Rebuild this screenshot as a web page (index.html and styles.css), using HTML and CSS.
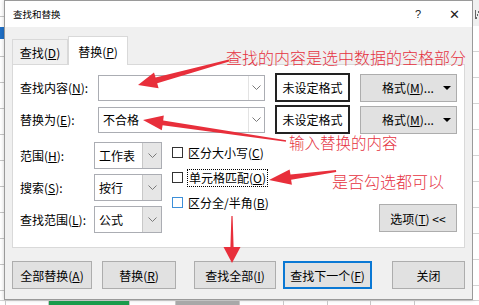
FILE: index.html
```html
<!DOCTYPE html>
<html lang="zh-CN">
<head>
    <meta charset="UTF-8">
    <meta name="viewport" content="width=device-width, initial-scale=1.0">
    <title>查找和替换</title>
    <link rel="stylesheet" href="styles.css">
</head>
<body>

    <div class="desk">
        <div class="sheet-left"></div>

        <div class="dialog">
            <div class="titlebar">
                <span class="title">查找和替换</span>
                <span class="help">?</span>
                <span class="close">✕</span>
            </div>

            <div class="tabs">
                <div class="tab">查找(<u>D</u>)</div>
                <div class="tab active">替换(<u>P</u>)</div>
            </div>

            <div class="panel">
                <div class="row">
                    <span class="label">查找内容(<u>N</u>):</span>
                    <div class="combo wide">
                        <span class="value"></span>
                        <span class="drop"><svg width="9" height="5" viewBox="0 0 9 5"><polyline points="0.5,0.5 4.5,4.5 8.5,0.5" fill="none" stroke="#7a7a7a" stroke-width="1"/></svg></span>
                    </div>
                    <div class="preview">未设定格式</div>
                    <div class="btn fmt">格式(<u>M</u>)... <span class="tri"></span></div>
                </div>
                <div class="row">
                    <span class="label">替换为(<u>E</u>):</span>
                    <div class="combo wide">
                        <span class="value">不合格</span>
                        <span class="drop"><svg width="9" height="5" viewBox="0 0 9 5"><polyline points="0.5,0.5 4.5,4.5 8.5,0.5" fill="none" stroke="#7a7a7a" stroke-width="1"/></svg></span>
                    </div>
                    <div class="preview">未设定格式</div>
                    <div class="btn fmt">格式(<u>M</u>)... <span class="tri"></span></div>
                </div>

                <div class="lower">
                    <div class="fields">
                        <div class="field">
                            <span class="label short">范围(<u>H</u>):</span>
                            <div class="combo small">
                                <span class="value">工作表</span>
                                <span class="drop"><svg width="9" height="5" viewBox="0 0 9 5"><polyline points="0.5,0.5 4.5,4.5 8.5,0.5" fill="none" stroke="#7a7a7a" stroke-width="1"/></svg></span>
                            </div>
                        </div>
                        <div class="field">
                            <span class="label short">搜索(<u>S</u>):</span>
                            <div class="combo small">
                                <span class="value">按行</span>
                                <span class="drop"><svg width="9" height="5" viewBox="0 0 9 5"><polyline points="0.5,0.5 4.5,4.5 8.5,0.5" fill="none" stroke="#7a7a7a" stroke-width="1"/></svg></span>
                            </div>
                        </div>
                        <div class="field">
                            <span class="label short">查找范围(<u>L</u>):</span>
                            <div class="combo small">
                                <span class="value">公式</span>
                                <span class="drop"><svg width="9" height="5" viewBox="0 0 9 5"><polyline points="0.5,0.5 4.5,4.5 8.5,0.5" fill="none" stroke="#7a7a7a" stroke-width="1"/></svg></span>
                            </div>
                        </div>
                    </div>

                    <div class="checks">
                        <div class="check"><span class="box"></span><span>区分大小写(<u>C</u>)</span></div>
                        <div class="check"><span class="box"></span><span class="focus">单元格匹配(<u>O</u>)</span></div>
                        <div class="check"><span class="box blue"></span><span>区分全/半角(<u>B</u>)</span></div>
                    </div>

                    <div class="btn options">选项(<u>T</u>) &lt;&lt;</div>
                </div>
            </div>

            <div class="actions">
                <div class="btn act-all">全部替换(<u>A</u>)</div>
                <div class="btn act-one">替换(<u>R</u>)</div>
                <div class="btn act-find">查找全部(<u>I</u>)</div>
                <div class="btn act-next">查找下一个(<u>F</u>)</div>
                <div class="btn act-close">关闭</div>
            </div>
        </div>

        <div class="sheet-right"><span class="col-head"></span></div>
    </div>

    <div class="sheet-row">
        <span class="cell c1"></span>
        <span class="cell c2"></span>
        <span class="cell c3 green"></span>
        <span class="cell c4"></span>
        <span class="cell c5 grey"></span>
        <span class="cell c6"></span>
        <span class="cell c7"></span>
        <span class="cell c8"></span>
        <span class="cell c9"></span>
    </div>

    <!-- 标注: 红色箭头和文字 -->
    <div class="notes">
        <svg class="arrows" width="479" height="305" viewBox="0 0 479 305">
            <polygon points="228.8,59.6 155.6,77.4 154.0,72.6 138,85 158.6,88.2 157.2,83.2 229.2,61.6" />
            <polygon points="286.1,140.2 163.2,120.6 163.8,115.4 143,120 161.8,130.2 162.6,125.2 285.9,141.8" />
            <polygon points="336,170 290.5,174.4 289.6,169.4 269,180 291.9,184.8 291.1,179.8 336.2,172" />
            <polygon points="231.4,216 230.4,247 223.5,247 232,263 240.5,247 233.6,247 232.6,216" />
        </svg>
        <span class="note n1">查找的内容是选中数据的空格部分</span>
        <span class="note n2">输入替换的内容</span>
        <span class="note n3">是否勾选都可以</span>
    </div>

</body>
</html>
```

FILE: styles.css
```css
/* 查找和替换 对话框 */
body {
    margin: 0;
    width: 479px;
    height: 305px;
    overflow: hidden;
    position: relative;
    background-color: #fff;
    font-family: "Noto Sans CJK SC", "Microsoft YaHei", sans-serif;
    font-size: 12px;
    color: #000;
}

u {
    text-decoration: underline;
    text-underline-offset: 1px;
}

.desk {
    display: flex;
    height: 300px;
}

/* 背后的表格 */
.sheet-left {
    width: 4px;
    background:
        linear-gradient(#1f6fc5, #1f6fc5) 0 27px / 100% 12px no-repeat,
        repeating-linear-gradient(to bottom, #fff 0 25px, #c6c6c6 25px 26px) 0 31px;
    background-color: #fff;
}

.sheet-right {
    width: 6px;
    background:
        linear-gradient(#f0f0f0, #f0f0f0) 0 0 / 100% 26px no-repeat,
        repeating-linear-gradient(to bottom, #fff 0 25px, #d4d4d4 25px 26px) 0 26px;
}

/* 列标 M 的左半边 */
.col-head {
    display: block;
    width: 4px;
    height: 9px;
    margin: 10px 0 0 2px;
    border-left: 1px solid #666;
    box-sizing: border-box;
    background: linear-gradient(to bottom right, transparent 45%, #666 45% 60%, transparent 60%) no-repeat;
}

.sheet-row {
    display: flex;
    height: 5px;
    border-top: 1px solid #d4d4d4;
}

.cell {
    height: 100%;
    border-right: 1px solid #c6c6c6;
    box-sizing: border-box;
}

.c1 { width: 6px; }
.c2 { width: 43px; }
.c3 { width: 81px; }
.c4 { width: 46px; }
.c5 { width: 64px; }
.c6 { width: 44px; }
.c7 { width: 44px; }
.c8 { width: 43px; }
.c9 { width: 44px; }

.green { background-color: #1a9b4b; }
.grey { background-color: #a8a8a8; }

/* 对话框 */
.dialog {
    width: 469px;
    box-sizing: border-box;
    border: 1px solid #9a9a9a;
    background-color: #f0f0f0;
    box-shadow: 0 0 4px rgba(0, 0, 0, 0.2);
    padding: 0 7px 10px 7px;
}

.titlebar {
    display: flex;
    align-items: center;
    height: 26px;
    margin: 0 -7px;
    padding: 0 8px;
    background-color: #fff;
}

.title {
    font-size: 9.5px;
    flex: 1;
}

.help {
    font-family: "Liberation Sans", Arial, sans-serif;
    font-size: 11px;
    margin-right: 28px;
    color: #222;
}

.close {
    font-family: "DejaVu Sans", sans-serif;
    font-size: 13px;
    margin-right: 4px;
    color: #222;
}

.tabs {
    display: flex;
    align-items: flex-end;
    height: 28px;
    margin-top: 9px;
}

.tab {
    display: flex;
    align-items: center;
    justify-content: center;
    box-sizing: border-box;
    height: 25px;
    width: 56px;
    border: 1px solid #d9d9d9;
    border-bottom: none;
}

.tab.active {
    position: relative;
    z-index: 1;
    width: 60px;
    height: 29px;
    margin-bottom: -1px;
    background-color: #fff;
}

.panel {
    height: 184px;
    box-sizing: border-box;
    background-color: #fff;
    border: 1px solid #d9d9d9;
    padding: 8px 7px 11px 7px;
}

.row {
    display: flex;
    align-items: center;
    height: 29px;
    margin-bottom: 3px;
}

.label {
    width: 78px;
    flex-shrink: 0;
}

.label.short {
    width: 74px;
}

.combo {
    display: flex;
    box-sizing: border-box;
    border: 1px solid #abadb3;
    background-color: #fff;
}

.combo .value {
    flex: 1;
    display: flex;
    align-items: center;
    padding-left: 4px;
}

.combo .drop {
    display: flex;
    align-items: center;
    justify-content: center;
}

.combo.wide {
    width: 167px;
    height: 26px;
}

.combo.wide .drop {
    width: 15px;
    border-left: 1px solid #e3e3e3;
}

.combo.small {
    width: 68px;
    height: 27px;
}

.combo.small .drop {
    width: 18px;
    background-color: #e6e6e6;
    border-left: 1px solid #c8c8c8;
}

.preview {
    display: flex;
    align-items: center;
    justify-content: center;
    box-sizing: border-box;
    width: 75px;
    height: 29px;
    margin-left: 10px;
    border: 2px solid #222;
}

.btn {
    display: flex;
    align-items: center;
    justify-content: center;
    box-sizing: border-box;
    height: 28px;
    background-color: #e1e1e1;
    border: 1px solid #adadad;
    white-space: pre;
}

.fmt {
    width: 97px;
    margin-left: 10px;
    justify-content: flex-start;
    padding-left: 21px;
    padding-right: 5px;
}

.tri {
    margin-left: auto;
    width: 0;
    height: 0;
    border-left: 4px solid transparent;
    border-right: 4px solid transparent;
    border-top: 4px solid #000;
}

.lower {
    display: flex;
    height: 93px;
    margin-top: 6px;
}

.fields {
    display: flex;
    flex-direction: column;
    gap: 5px;
    padding-top: 2px;
}

.field {
    display: flex;
    align-items: center;
}

.checks {
    display: flex;
    flex-direction: column;
    margin-left: 10px;
}

.check {
    display: flex;
    align-items: center;
    height: 25px;
}

.box {
    width: 11px;
    height: 11px;
    box-sizing: border-box;
    border: 1px solid #333;
    margin-right: 5px;
    background-color: #fff;
}

.box.blue {
    border-color: #3d8fd8;
}

.focus {
    outline: 1px dotted #000;
    padding: 0 1px;
    line-height: 16px;
}

.options {
    width: 78px;
    margin-left: auto;
    align-self: flex-end;
    margin-bottom: 1px;
}

.actions {
    display: flex;
    margin-top: 13px;
}

.act-all { width: 80px; }
.act-one { width: 74px; margin-left: 10px; }
.act-find { width: 82px; margin-left: 18px; }
.act-next {
    width: 89px;
    margin-left: 7px;
    border: 2px solid #0a78d4;
}
.act-close { width: 73px; margin-left: 20px; }

/* 红色标注 */
.notes {
    position: absolute;
    left: 0;
    top: 0;
    width: 479px;
    height: 305px;
    pointer-events: none;
}

.arrows {
    position: absolute;
    left: 0;
    top: 0;
}

.arrows polygon {
    fill: #e82f3b;
}

.note {
    position: absolute;
    color: #e5323f;
    font-weight: 300;
    white-space: nowrap;
    line-height: 20px;
}

.n1 {
    left: 226px;
    top: 47px;
    font-size: 16px;
}

.n2 {
    left: 289px;
    top: 132px;
    font-size: 15.5px;
}

.n3 {
    left: 332px;
    top: 171px;
    font-size: 16px;
}
```
